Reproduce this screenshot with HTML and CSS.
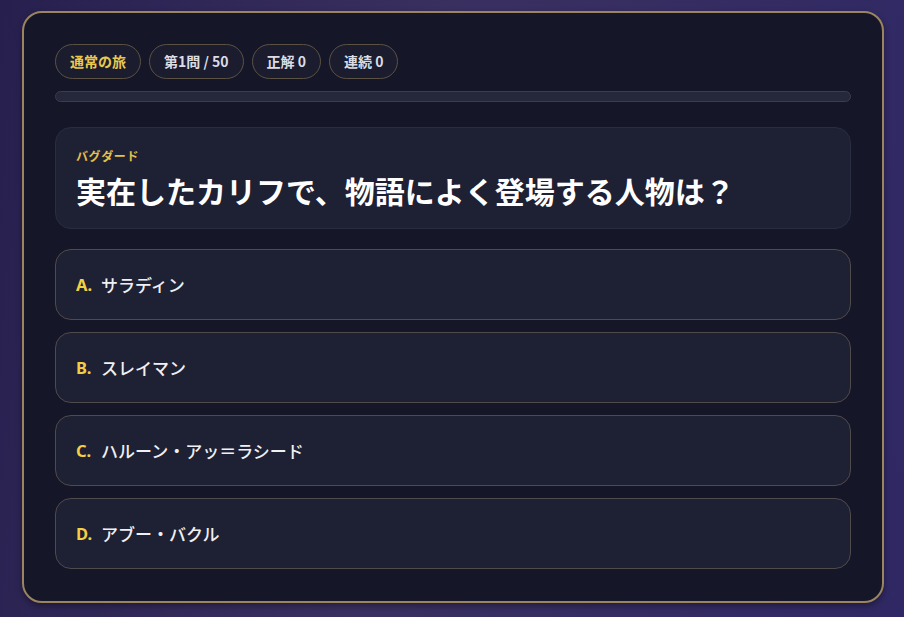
FILE: index.html
```html
<!DOCTYPE html>
<html lang="ja">
<head>
<meta charset="utf-8">
<link rel="stylesheet" href="styles.css">
</head>
<body>
<main class="card">
  <div class="pills">
    <span class="pill pill-mode">通常の旅</span>
    <span class="pill">第1問 / 50</span>
    <span class="pill">正解 0</span>
    <span class="pill">連続 0</span>
  </div>
  <div class="progress"><div class="progress-fill"></div></div>
  <section class="question">
    <div class="place">バグダード</div>
    <h1 class="title">実在したカリフで、物語によく登場する人物は？</h1>
  </section>
  <div class="options">
    <button class="option"><span class="letter">A.</span><span class="otext">サラディン</span></button>
    <button class="option"><span class="letter">B.</span><span class="otext">スレイマン</span></button>
    <button class="option"><span class="letter">C.</span><span class="otext">ハルーン・アッ＝ラシード</span></button>
    <button class="option"><span class="letter">D.</span><span class="otext">アブー・バクル</span></button>
  </div>
</main>
</body>
</html>
```
FILE: styles.css
```css
* { box-sizing: border-box; }
html, body { height: 100%; }
body {
  margin: 0;
  padding: 11px 20px 0 22px;
  background: linear-gradient(100deg, #27204f 0%, #3a3060 45%, #2f2864 100%);
  font-family: "Noto Sans CJK JP", "Noto Sans", sans-serif;
  color: #ecebf2;
}
.card {
  width: 862px;
  height: 592px;
  border: 2px solid #9a8560;
  border-radius: 20px;
  background: #151628;
  padding: 31px 31px;
  display: flex;
  flex-direction: column;
  box-shadow: 0 3px 6px rgba(0,0,0,0.35);
}
.pills {
  display: flex;
  gap: 8px;
}
.pill {
  height: 35px;
  padding: 0 14px;
  border: 1px solid #5b5244;
  border-radius: 18px;
  background: #1b1c2e;
  font-size: 14px;
  font-weight: 700;
  line-height: 33px;
  color: #dcdce4;
  white-space: nowrap;
}
.pill-mode { color: #e9c94e; }
.progress {
  margin-top: 12px;
  height: 11px;
  border: 1px solid #3b3c4c;
  border-radius: 6px;
  background: #25273a;
}
.progress-fill { width: 0; }
.question {
  margin-top: 25px;
  height: 102px;
  border: 1px solid #2a2c42;
  border-radius: 16px;
  background: #1e2033;
  padding: 20px 20px 0;
}
.place {
  font-size: 12px;
  font-weight: 700;
  color: #e2c14c;
  line-height: 16px;
  letter-spacing: 0.6px;
}
.title {
  margin: 6px 0 0;
  font-size: 30px;
  font-weight: 700;
  line-height: 40px;
  color: #ffffff;
}
.options {
  margin-top: 20px;
  display: flex;
  flex-direction: column;
  gap: 12px;
}
.option {
  height: 71px;
  display: flex;
  align-items: center;
  padding: 0 20px;
  border: 1px solid #4f4b4c;
  border-radius: 16px;
  background: #1e2033;
  font-family: "Noto Sans CJK JP", "Noto Sans", sans-serif;
  text-align: left;
  cursor: pointer;
}
.letter {
  font-family: "Noto Sans", "Noto Sans CJK JP", sans-serif;
  font-size: 16.5px;
  font-weight: 700;
  color: #f2cf45;
  width: 25px;
  margin-top: -1px;
}
.otext {
  font-size: 17px;
  font-weight: 500;
  color: #f0f0f4;
  margin-top: -1px;
}
```
